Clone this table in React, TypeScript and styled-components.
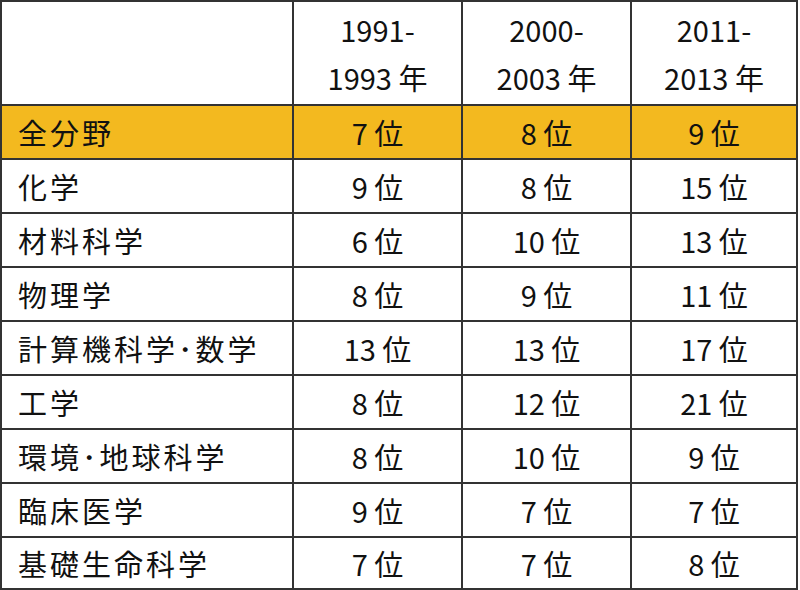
import React from "react";
import styled, { createGlobalStyle } from "styled-components";

const GlobalStyle = createGlobalStyle`
  html, body {
    margin: 0;
    padding: 0;
    background: #ffffff;
  }
  body {
    font-family: "Noto Sans CJK JP", "Liberation Sans", sans-serif;
    color: #111111;
  }
`;

interface Row {
  field: string;
  ranks: number[];
  highlight?: boolean;
}

const rows: Row[] = [
  { field: "全分野", ranks: [7, 8, 9], highlight: true },
  { field: "化学", ranks: [9, 8, 15] },
  { field: "材料科学", ranks: [6, 10, 13] },
  { field: "物理学", ranks: [8, 9, 11] },
  { field: "計算機科学･数学", ranks: [13, 13, 17] },
  { field: "工学", ranks: [8, 12, 21] },
  { field: "環境･地球科学", ranks: [8, 10, 9] },
  { field: "臨床医学", ranks: [9, 7, 7] },
  { field: "基礎生命科学", ranks: [7, 7, 8] },
];

const periods = [
  ["1991-", "1993 年"],
  ["2000-", "2003 年"],
  ["2011-", "2013 年"],
];

const App = (): JSX.Element => {
  return (
    <>
      <GlobalStyle />
      <Table>
        <HeadCell />
        {periods.map(([from, to]) => (
          <HeadCell key={from}>
            <Line>{from}</Line>
            <Line>{to}</Line>
          </HeadCell>
        ))}
        {rows.map((row) => (
          <React.Fragment key={row.field}>
            <FieldCell $highlight={row.highlight}>{row.field}</FieldCell>
            {row.ranks.map((rank, i) => (
              <RankCell key={i} $highlight={row.highlight}>
                {rank} 位
              </RankCell>
            ))}
          </React.Fragment>
        ))}
      </Table>
    </>
  );
};

export default App;

const Table = styled.div`
  display: grid;
  grid-template-columns: 290px 167px 167px 164px;
  grid-template-rows: 102px repeat(8, 52px) 50px;
  gap: 2px;
  width: 798px;
  box-sizing: border-box;
  border: 2px solid #333333;
  background: #333333;
  font-size: 29px;
`;

const HeadCell = styled.div`
  background: #ffffff;
  display: flex;
  flex-direction: column;
  align-items: center;
  justify-content: center;
`;

const Line = styled.div`
  line-height: 48px;
`;

const Cell = styled.div<{ $highlight?: boolean }>`
  background: ${(p) => (p.$highlight ? "#f3b91f" : "#ffffff")};
  display: flex;
  align-items: center;
  white-space: nowrap;
`;

const FieldCell = styled(Cell)`
  padding-left: 16px;
  letter-spacing: 3px;
`;

const RankCell = styled(Cell)`
  justify-content: center;
`;
